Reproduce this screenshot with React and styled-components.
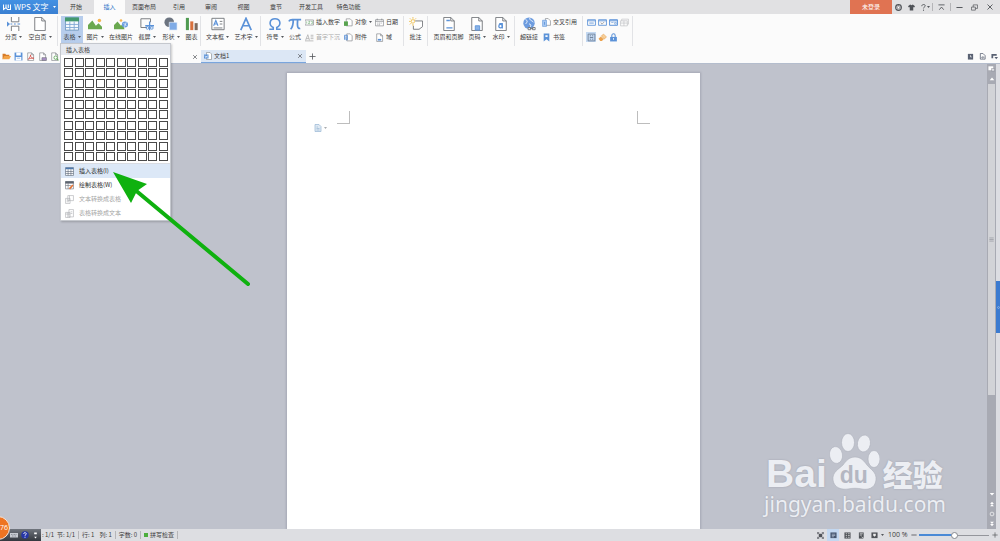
import React, { useState } from 'react';
import styled, { createGlobalStyle, css } from 'styled-components';

const GlobalStyle = createGlobalStyle`
  * {
    box-sizing: border-box;
  }
  body {
    margin: 0;
    overflow: hidden;
    font-family: 'Noto Sans CJK SC', 'Noto Sans', sans-serif;
    font-size: 6px;
    line-height: 8px;
    color: #3c3c3c;
  }
  button, input {
    font: inherit;
    color: inherit;
    margin: 0;
    padding: 0;
    border: 0;
    background: none;
  }
`;

const Shell = styled.div`
  position: relative;
  display: flex;
  flex-direction: column;
  height: 100vh;
  background: #fbfbfb;
`;

const Row = styled.div`
  display: flex;
  align-items: center;
`;

/* ---------- title bar ---------- */
const TitleBar = styled.header`
  display: flex;
  align-items: stretch;
  height: 14px;
  flex: none;
  background: #e1e1e3;
`;

const Brand = styled.button`
  display: flex;
  align-items: center;
  gap: 3px;
  width: 58px;
  padding: 0 2px 0 3px;
  font-size: 8px;
  color: white;
  background: linear-gradient(#4391e3, #3a80d2);
  white-space: nowrap;

  svg:last-child {
    margin-left: auto;
  }
`;

const Tab = styled.button`
  width: ${(p) => p.$w}px;
  white-space: nowrap;
  color: ${(p) => (p.$active ? '#2f74c8' : '#3c3c3c')};
  background: ${(p) => (p.$active ? '#fbfbfb' : 'transparent')};
`;

const WindowTools = styled.div`
  display: flex;
  align-items: center;
  margin-left: auto;
`;

const LoginButton = styled.button`
  align-self: stretch;
  width: 42px;
  color: white;
  background: #e07352;
`;

const ToolButton = styled.button`
  display: flex;
  align-items: center;
  justify-content: center;
  width: ${(p) => p.$w || 12}px;
  height: ${(p) => p.$h || 12}px;
  flex: none;
  background: ${(p) => (p.$on ? '#c3d8f1' : 'transparent')};
`;

const Divider = styled.span`
  width: 1px;
  height: 8px;
  background: #b5b5b8;
`;

/* ---------- ribbon ---------- */
const Ribbon = styled.div`
  display: flex;
  align-items: flex-start;
  height: 36px;
  flex: none;
  padding-top: 2px;
`;

const Group = styled.div`
  display: flex;
  height: 30px;
  padding: 0 ${(p) => p.$right || 0}px 0 ${(p) => p.$left || 0}px;
  border-right: 1px solid #e2e3e6;
`;

const BigButton = styled.button`
  display: flex;
  flex-direction: column;
  align-items: center;
  gap: 2px;
  width: ${(p) => p.$w}px;
  height: 27px;
  padding-top: 1px;
  white-space: nowrap;
  background: ${(p) => (p.$on ? '#b7cdec' : 'transparent')};
`;

const Label = styled.span`
  display: flex;
  align-items: center;
  gap: 2px;
`;

const Column = styled.div`
  display: flex;
  flex-direction: column;
  gap: 5px;
  padding-top: 1px;
  margin-left: ${(p) => p.$gap || 2}px;
  width: ${(p) => p.$w}px;
`;

const SmallButton = styled.button`
  display: flex;
  align-items: center;
  gap: 2px;
  height: 10px;
  white-space: nowrap;
  color: ${(p) => (p.disabled ? '#ababab' : '#3c3c3c')};
`;

const IconGrid = styled.div`
  display: grid;
  grid-template-columns: repeat(4, 11px);
  grid-auto-rows: 10px;
  row-gap: 5px;
  padding-top: 1px;
`;

/* ---------- document tabs ---------- */
const DocBar = styled.div`
  display: flex;
  align-items: stretch;
  height: 14px;
  flex: none;
  border-bottom: 1px solid #b4bdcd;
`;

const QuickTools = styled(Row)`
  width: 58px;
`;

const DocTab = styled.div`
  display: flex;
  align-items: center;
  gap: 2px;
  width: ${(p) => p.$w}px;
  padding-left: 3px;
  ${(p) =>
    p.$active &&
    css`
      background: #dce7f5;
      border-bottom: 1px solid #79a5dd;
    `}

  button {
    margin-left: auto;
  }
`;

/* ---------- work area ---------- */
const Workspace = styled.div`
  display: flex;
  flex: 1;
  min-height: 0;
  background: #bfc2cc;
`;

const Canvas = styled.main`
  flex: 1;
  padding-top: 9px;
  display: flex;
  justify-content: center;
`;

const Page = styled.article`
  width: calc(42% - 2px);
  background: white;
  box-shadow: 0 0 2px 1px #a5a8b4;
`;

const Corners = styled.div`
  display: flex;
  justify-content: space-between;
  padding: 38px 50px 0;
`;

const Corner = styled.span`
  width: 13px;
  height: 13px;
  border-bottom: 1px solid #bdbdbd;
  border-${(p) => p.$side}: 1px solid #bdbdbd;
`;

const PasteButton = styled.button`
  display: flex;
  align-items: center;
  gap: 2px;
  margin-left: 27px;
`;

const ScrollBar = styled.div`
  display: flex;
  flex-direction: column;
  align-items: center;
  width: 9px;
  background: #a8aab3;
`;

const Thumb = styled.div`
  display: flex;
  align-items: center;
  justify-content: center;
  width: 7px;
  flex: 312;
  background: #d2d3d7;
`;

const Track = styled.div`
  flex: 94;
`;

const SideStrip = styled.div`
  display: flex;
  flex-direction: column;
  width: 4px;
  background: #dcdde2;

  &::before {
    content: '';
    flex: 217;
  }
  &::after {
    content: '';
    flex: 196;
  }
`;

const SideHandle = styled.button`
  display: flex;
  align-items: center;
  justify-content: center;
  width: 4px;
  height: 52px;
  background: #3c7bd0;
`;

/* ---------- table menu ---------- */
const Menu = styled.div`
  position: absolute;
  left: 60px;
  top: 43px;
  width: 111px;
  border: 1px solid #c5c8ce;
  background: white;
  box-shadow: 1px 1px 2px rgba(0, 0, 0, 0.2);
`;

const MenuTitle = styled.div`
  height: 11px;
  padding: 2px 5px 1px;
  background: #e6e9ef;
`;

const Cells = styled.div`
  display: grid;
  grid-template-columns: repeat(10, 9px);
  grid-template-rows: repeat(10, 9px);
  justify-content: space-between;
  align-content: space-between;
  height: 103px;
  margin: 3px 2px 2px 3px;

  span {
    border: 1px solid #4a4a4a;
  }
`;

const MenuItems = styled.div`
  border-top: 1px solid #d9dce2;
`;

const MenuItem = styled.button`
  display: flex;
  align-items: center;
  gap: 5px;
  width: 100%;
  height: 14px;
  padding-left: 4px;
  color: ${(p) => (p.disabled ? '#a3a3a3' : '#2c2c2c')};
  background: ${(p) => (p.$on ? '#dce8f7' : 'transparent')};
`;

/* ---------- status bar ---------- */
const StatusBar = styled.footer`
  display: flex;
  align-items: center;
  justify-content: space-between;
  height: 12px;
  flex: none;
  background: #dddee2;
  white-space: nowrap;
`;

const StatusText = styled(Row)`
  padding-left: 42px;
  gap: 3px;
`;

const Pair = styled.span`
  margin-right: 2px;
`;

const Spell = styled(Row)`
  gap: 2px;

  &::before {
    content: '';
    width: 4px;
    height: 4px;
    background: #4cae3c;
  }
`;

const Percent = styled.span`
  width: 19px;
  margin: 0 2px 0 4px;
  font-family: 'Open Sans', sans-serif;
  font-size: 7px;
`;

const Zoom = styled.input`
  appearance: none;
  width: 70px;
  height: 8px;
  background:
    linear-gradient(#4a8ad6, #4a8ad6) left center / 50% 2px no-repeat,
    linear-gradient(#94969c, #94969c) left center / 100% 1px no-repeat;

  &::-webkit-slider-thumb {
    appearance: none;
    width: 7px;
    height: 7px;
    border: 1px solid #85888f;
    border-radius: 50%;
    background: white;
  }
`;

/* ---------- things floating over the window ---------- */
const Arrow = styled.svg`
  position: absolute;
  left: 112px;
  top: 171px;
  pointer-events: none;
`;

const Watermark = styled.div`
  position: absolute;
  right: 54px;
  bottom: 23px;
  color: #eceef3;
  text-shadow: 0 0 2px #9b9eaa;
`;

const LogoLine = styled.div`
  display: flex;
  align-items: flex-end;
  height: 60px;
`;

const Bai = styled.span`
  margin-left: 2px;
  font: bold 39px/32px 'Liberation Sans', sans-serif;
`;

const JingYan = styled.span`
  font-size: 30px;
  font-weight: 900;
  line-height: 34px;
  margin-left: 3px;
`;

const Paw = styled.div`
  position: relative;
  width: 51px;
  height: 57px;
  margin-left: 2px;

  span {
    position: absolute;
    left: 11px;
    bottom: 1px;
    font: bold 23px/28px 'Liberation Sans', sans-serif;
    color: #b4b7c2;
    text-shadow: none;
  }
`;

const Site = styled.div`
  font: 21px/28px 'Noto Sans', sans-serif;
`;

const Tray = styled.div`
  position: absolute;
  left: 0;
  bottom: 0;
  display: flex;
  align-items: center;
  justify-content: space-between;
  width: 41px;
  height: 12px;
  padding: 0 2px 0 10px;
  background: linear-gradient(#70757d, #33373e);
`;

const Ball = styled.div`
  position: absolute;
  left: -14px;
  bottom: 1px;
  width: 24px;
  height: 24px;
  padding: 0 1px;
  border: 1px solid #f6e5da;
  border-radius: 50%;
  background: #ee7422;
  color: white;
  font: 7px/22px 'Open Sans', sans-serif;
  text-align: right;
`;

/* ---------- drawings ---------- */
const G = '#6d7075';
const B = '#5b92d8';

const sheet = <path d="M3 1.5h7l3.500 3.500v10h-10.500zM10 1.500v3.500h3.500" fill="white" stroke={G} />;
const bigSheet = <path d="M2 .5h8l4 4v11H2zM10 .5v4h4" fill="white" stroke={G} />;

const shapes = {
  brand: <path d="M1 3v10l5-4 3 4h6V3M6 3v6M10.500 3v7" stroke="white" strokeWidth="2.200" />,
  pageBreak: <><path d="M5 0v5.500h8.500V0M5 16v-5.500h8.500V16" fill="white" stroke={G} /><path d="M4 8h2M8 8h2M12 8h3" stroke={B} strokeWidth="1.200" /><path d="M0 5l3.500 3L0 11z" fill={B} /></>,
  blank: bigSheet,
  table: <><path d="M.5 1h15v14H.5z" fill="#f4f9fd" stroke="#6d94bd" /><path d="M0 .5h16V5H0z" fill="#43996f" /><path d="M.5 8.500h15M.5 12h15M5.500 5v10M10.500 5v10" stroke="#7ea6d3" /></>,
  picture: <><path d="M0 14V9l5-5 4 6 3-3 4 4v3z" fill="#6aa84f" /><circle cx="13" cy="4" r="2" fill="#f3b552" /></>,
  webPicture: <><path d="M0 14V9l4-4 4 5 2-2 2 6z" fill="#6aa84f" /><circle cx="8" cy="4" r="1.500" fill="#f3b552" /><circle cx="12.500" cy="8.500" r="3.500" fill="#6c9fe0" /><path d="M11 7l3 3M14 6l-2 5" stroke="white" strokeWidth=".8" /></>,
  capture: <><path d="M8 12H1V2h11v4" stroke={G} /><path d="M11 5v10M6 10h10" stroke={B} strokeWidth="1.500" /><circle cx="8.500" cy="12.500" r="1.500" stroke={B} /><circle cx="13.500" cy="12.500" r="1.500" stroke={B} /></>,
  shape: <><circle cx="6" cy="6" r="5.500" fill="#6c7480" /><path d="M6 6h9v9H6z" fill="#7fabe6" stroke="#fbfbfb" strokeWidth=".7" /></>,
  chart: <><path d="M1 1h3.500v14H1z" fill="#4f9a51" /><path d="M6 5h3.500v10H6z" fill="#d8713d" /><path d="M11 7h3.500v8H11z" fill="#7d6b5e" /></>,
  textBox: <><path d="M1 1.500h14v13H1z" fill="white" stroke={G} /><path d="M3 10l2.500-6L8 10M4 8h3" stroke={B} strokeWidth="1.300" /><path d="M10 5h3M10 8h3M3 12.500h10" stroke={G} /></>,
  art: <path d="M2 15L8 1.500 14 15M4.500 10h7" stroke={B} strokeWidth="1.900" />,
  omega: <path d="M1.500 14H6v-2C3 10.500 2 8.500 2.500 6 3 3.500 5 2 8 2s5 1.500 5.500 4c.5 2.500-.5 4.500-3.500 6v2h4.500" stroke={B} strokeWidth="1.800" />,
  pi: <path d="M1 5c1-2 2-2 4-2h10M6 3c0 5-1 9-3 11M11 3c-.5 6-.5 11 3 10" stroke={B} strokeWidth="2" />,
  number: <><path d="M0 3.500h15v9H0z" fill="white" stroke={G} /><path d="M3 6v4M6 6h3l-3 4h3M11 6h2v4h-2" stroke="#5ca35f" /></>,
  drop: <><path d="M1 13L5 3l3 10M2 10h5M10 4h5M10 7h5M10 10h5M0 14h15" stroke="#b3b3b3" strokeWidth="1.500" /></>,
  object: <><path d="M4 1.500h7l3.500 3.500v9H4z" fill="white" stroke={G} /><path d="M0 6h7v8H0z" fill="#58a34f" /></>,
  attach: <><path d="M5 1.500h6l3.500 3.500v9H5z" fill="white" stroke={G} /><path d="M1 12V4h5v8H3.500V6" stroke={B} strokeWidth="1.600" /></>,
  date: <><path d="M1 3h14v11H1zM1 6h14" fill="white" stroke={G} /><path d="M4 1v3M12 1v3M4 9h2M7 9h2M10 9h2M4 12h2M7 12h2" stroke={G} /></>,
  field: <>{sheet}<path d="M5 12h6" stroke={B} strokeWidth="3" /></>,
  comment: <><path d="M7 4.500h8.500v6.500l-4 3H5v-4" fill="white" stroke={G} /><circle cx="4.500" cy="5" r="2" stroke="#efc04f" /><path d="M4.500 0v2M4.500 8v2M0 5h2M1 1.500l1.500 1.500M8 1.500L6.500 3M1 8.500L2.500 7" stroke="#efc04f" /></>,
  header: <>{bigSheet}<path d="M5 4h4M5 12.500h7" stroke={B} strokeWidth="1.500" /></>,
  pageNo: <>{bigSheet}<path d="M6 10h5v5H6z" fill="#8ab3e8" stroke={B} /></>,
  stamp: <>{bigSheet}<circle cx="7.500" cy="10.500" r="2" stroke={B} strokeWidth="1.500" /><path d="M6 7.500h3.500V13" stroke={B} strokeWidth="1.300" /></>,
  link: <><circle cx="8" cy="7" r="6.500" fill="#6d9cdf" /><path d="M4 3c3 1 2 3 0 5M9 1c-1 3 3 3 4 5M8 8c3 0 2 3 1 4" stroke="white" /><path d="M7 12h3v2.500H7zM12 12h3v2.500h-3zM9 13h4" stroke={G} fill="white" /></>,
  crossRef: <><path d="M6 1h5l4 4v8H6z" fill="white" stroke={G} /><path d="M1 4h7v11H1z" fill="#a9c9f2" stroke={B} /><path d="M4.500 12V7" stroke={B} strokeWidth="1.500" /></>,
  bookmark: <><path d="M3 1h10v14l-5-4-5 4z" fill={B} /><path d="M6 4h4v3H6z" fill="white" /></>,
  form: <path d="M1 3h14v10H1zM1 5h14M4 9h8" stroke={B} strokeWidth="1.500" />,
  formCheck: <><path d="M1 3h14v10H1zM1 5h14" stroke={B} strokeWidth="1.500" /><path d="M5 8l2 3 4-4" stroke={G} /></>,
  formList: <><path d="M1 3h14v10H1zM1 5h14" stroke={B} strokeWidth="1.700" /><path d="M4 8h4M10 8h3v3h-3z" stroke={B} /></>,
  formGray: <path d="M1 5h12v9H1zM3 5V2h12v9h-2M7 5v9M1 9h12" stroke="#b6b8bb" />,
  shade: <><path d="M2 2h12v12H2z" stroke="#66788f" strokeWidth="1.400" /><path d="M5 5h2M9 5h2M5 8h6M5 11h2M9 11h2" stroke="#66788f" strokeWidth="1.500" /></>,
  eraser: <><path d="M1 10l4-4 5 5-3 3H4z" fill="#eca24c" /><path d="M6 5l4-3 5 5-4 4z" fill="#f7cf97" stroke="#e29a47" /></>,
  lock: <><path d="M5 7V4.500a3 3 0 016 0V7" stroke={B} strokeWidth="1.800" /><path d="M2 7h12v8H2z" fill={B} /><path d="M8 9v3" stroke="white" strokeWidth="1.500" /></>,
  folder: <><path d="M1 13V3h5l1 2h6v3" fill="#d77b27" /><path d="M1 13l3-6h12l-3 6z" fill="#f2a347" /></>,
  save: <><path d="M1 1h14v14H1z" fill="#5b92d8" /><path d="M4 1h8v5H4zM3 9h10v6H3z" fill="white" /><path d="M5 11h6" stroke={B} /></>,
  pdf: <>{sheet}<path d="M4 13c3-3 4-6 4-8 0 4 2 6 6 6-4 0-7 0-10 2z" stroke="#d14b42" strokeWidth="1.400" /></>,
  print: <>{sheet}<path d="M7 10h8v5H7z" fill="#a98fc4" stroke={G} /></>,
  preview: <>{sheet}<circle cx="10" cy="10" r="3" fill="white" stroke="#59a152" strokeWidth="1.500" /><path d="M12 12l3 3" stroke="#59a152" strokeWidth="1.800" /></>,
  wpsDoc: <><path d="M5 1h7l3 3v11H5z" fill="white" stroke={G} /><path d="M0 5h9v8H0z" fill={B} /><path d="M2 7l1 4 1.500-3L6 11l1-4" stroke="white" /></>,
  close: <path d="M3 3l10 10M13 3L3 13" stroke="#505358" strokeWidth="1.800" />,
  plus: <path d="M8 1v14M1 8h14" stroke="#505358" strokeWidth="1.800" />,
  minus: <path d="M1 8h14" stroke="#505358" strokeWidth="2.200" />,
  soccer: <><circle cx="8" cy="8" r="6.500" stroke="#505358" strokeWidth="2.500" /><path d="M8 5l3 2-1 4H6L5 7zM8 1v4M1 7h4M11 7h4" fill="white" stroke="#505358" /></>,
  shirt: <path d="M5 1l3 2 3-2 5 4-2 3-2-1v8H4V7L2 8 0 5z" fill="#505358" />,
  help: <><path d="M4 5c0-5 8-5 8-1 0 3-4 3-4 6" stroke="#505358" strokeWidth="2" /><circle cx="8" cy="14" r="1.300" fill="#505358" /></>,
  collapse: <path d="M1 2h14M3 13l5-6 5 6" stroke="#505358" strokeWidth="2" />,
  restore: <path d="M1 7h9v7H1zM5 7V2h10v8h-5" stroke="#505358" strokeWidth="1.600" />,
  panel: <><path d="M2 2h12v13H2z" fill="#5a6273" /><path d="M8 5v4h3" stroke="white" strokeWidth="1.500" /></>,
  docArrow: <><path d="M3 1h6l5 5v8H3z" stroke="#5a6273" strokeWidth="1.800" /><path d="M5 10h5M8 7l3 3-3 3" stroke="#5a6273" strokeWidth="1.500" /></>,
  listDown: <><path d="M1 2h12v4H5v6H1z" fill="#5a6273" /><path d="M8 9h8l-4 5z" fill="#5a6273" /></>,
  pasteDoc: <><path d="M2 1h8l4 4v10H2z" fill="#dfe9f3" stroke="#9cb9d5" strokeWidth="1.500" /><path d="M5 6h3M5 9h6M5 12h6" stroke="#9cb9d5" strokeWidth="1.500" /></>,
  menuTable: <><path d="M1 1h14v14H1z" fill="white" stroke="#4e5b6d" /><path d="M1 1h14v3H1z" fill="#4d79ad" /><path d="M1 8h14M1 11.500h14M5.500 4v11M10.500 4v11" stroke="#4e5b6d" /></>,
  menuDraw: <><path d="M1 1h14v13H1z" fill="white" stroke="#5f6670" /><path d="M1 1h14v3H1zM1 8h10M5.500 4v10" fill="#5f6670" stroke="#5f6670" /><path d="M8 14l6-7" stroke="#e1753a" strokeWidth="3" /></>,
  convertA: <path d="M5 1h10v9H5zM8 1v9M1 6h8v9H1zM3 9h4M3 12h4" fill="white" stroke="#a5a8ac" />,
  convertB: <path d="M7 1h8v13H7zM10 5h3M10 8h3M1 6h8v9H1zM1 9h8M5 6v9" fill="white" stroke="#a5a8ac" />,
  ruler: <><path d="M1 3h11v9H1z" fill="white" /><path d="M8 8h7v6H8z" fill="#dcdde2" stroke="#7b7e88" /></>,
  up: <path d="M2 11l6-7 6 7z" fill="white" />,
  down: <path d="M2 5l6 7 6-7z" fill="white" />,
  pageUp: <path d="M3 8l5-6 5 6zM3 14l5-6 5 6z" fill="white" />,
  pageDown: <path d="M3 2l5 6 5-6zM3 8l5 6 5-6z" fill="white" />,
  dot: <circle cx="8" cy="8" r="5" stroke="white" strokeWidth="1.800" />,
  grip: <path d="M1 3h14M1 8h14M1 13h14" stroke="#8d8f96" strokeWidth="2" />,
  full: <><path d="M4 4h8v8H4z" fill="#505358" /><path d="M1 5V1h4M11 1h4v4M15 11v4h-4M5 15H1v-4M2 2l12 12M14 2L2 14" stroke="#505358" strokeWidth="1.500" /></>,
  viewPage: <><path d="M1 1h14v13H1z" fill="#46566f" /><path d="M4 5h8M4 8h8M4 11h5" stroke="#dce8f7" strokeWidth="1.200" /></>,
  viewOutline: <><path d="M1 1h14v14H1z" fill="#505358" /><path d="M4 4h3M9 4h4M4 8h3M9 8h4M4 12h3M9 12h4" stroke="#eee" strokeWidth="1.500" /></>,
  viewWeb: <><path d="M2 1h11v14H2z" fill="#505358" /><path d="M4 4h7M4 7h5M8 11l6 4" stroke="#eee" strokeWidth="1.500" /></>,
  viewEye: <><path d="M1 1h14v13H1z" fill="#505358" /><path d="M5 4h6v4l-3 3-3-3z" fill="#eee" /></>,
  keyboard: <><path d="M0 4h16v9H0z" fill="#c8ccd2" /><path d="M2 7h12M4 10h8" stroke="#5a5f68" strokeDasharray="2 1" /></>,
  trayHelp: <><circle cx="8" cy="8" r="7.500" fill="#2636a8" /><path d="M5.500 6c0-4 5-3 5-.500 0 2-2.500 2-2.500 4M8 11.500v2" stroke="white" strokeWidth="1.800" /></>,
  trayMore: <path d="M5 1h6v4H5zM5 11h6l-3 4z" fill="white" />,
};

const Icon = ({ name, size = 8 }) => (
  <svg width={size} height={size} viewBox="0 0 16 16" fill="none" aria-hidden="true">
    {shapes[name]}
  </svg>
);

const Caret = ({ color = '#55585d' }) => (
  <svg width="3" height="2" viewBox="0 0 6 4" aria-hidden="true">
    <path d="M0 0h6L3 4z" fill={color} />
  </svg>
);

const Big = ({ icon, text, w, caret, on }) => (
  <BigButton type="button" $w={w} $on={on}>
    <Icon name={icon} size={14} />
    <Label>
      {text}
      {caret && <Caret />}
    </Label>
  </BigButton>
);

const Small = ({ icon, text, caret, disabled }) => (
  <SmallButton type="button" disabled={disabled}>
    <Icon name={icon} size={9} />
    {text}
    {caret && <Caret />}
  </SmallButton>
);

const tabs = [
  ['开始', 36],
  ['插入', 31],
  ['页面布局', 38],
  ['引用', 32],
  ['审阅', 32],
  ['视图', 33],
  ['章节', 32],
  ['开发工具', 38],
  ['特色功能', 37],
];

const App = () => {
  const [tab, setTab] = useState('插入');
  const [zoom, setZoom] = useState(100);

  return (
    <>
      <GlobalStyle />
      <Shell>
        <TitleBar>
          <Brand type="button">
            <Icon name="brand" size={8} />
            WPS 文字
            <Caret color="white" />
          </Brand>
          {tabs.map(([name, w]) => (
            <Tab key={name} type="button" $w={w} $active={name === tab} onClick={() => setTab(name)}>
              {name}
            </Tab>
          ))}
          <WindowTools>
            <LoginButton type="button">未登录</LoginButton>
            <ToolButton type="button"><Icon name="soccer" size={7} /></ToolButton>
            <ToolButton type="button" $w={14}><Icon name="shirt" size={7} /></ToolButton>
            <ToolButton type="button" $w={14}><Icon name="help" size={7} /><Caret /></ToolButton>
            <Divider />
            <ToolButton type="button" $w={17}><Icon name="collapse" size={7} /></ToolButton>
            <Divider />
            <ToolButton type="button" $w={17}><Icon name="minus" size={7} /></ToolButton>
            <ToolButton type="button"><Icon name="restore" size={7} /></ToolButton>
            <ToolButton type="button" $w={20}><Icon name="close" size={8} /></ToolButton>
          </WindowTools>
        </TitleBar>

        <Ribbon>
          <Group $right={4}>
            <Big icon="pageBreak" text="分页" w={27} caret />
            <Big icon="blank" text="空白页" w={26} caret />
          </Group>
          <Group $left={3}>
            <Big icon="table" text="表格" w={22} caret on />
            <Big icon="picture" text="图片" w={24} caret />
            <Big icon="webPicture" text="在线图片" w={28} />
            <Big icon="capture" text="截屏" w={24} caret />
            <Big icon="shape" text="形状" w={24} caret />
            <Big icon="chart" text="图表" w={17} />
          </Group>
          <Group $left={2}>
            <Big icon="textBox" text="文本框" w={29} caret />
            <Big icon="art" text="艺术字" w={28} caret />
          </Group>
          <Group $left={2} $right={3}>
            <Big icon="omega" text="符号" w={24} caret />
            <Big icon="pi" text="公式" w={16} />
            <Column $w={37}>
              <Small icon="number" text="插入数字" />
              <Small icon="drop" text="首字下沉" disabled />
            </Column>
            <Column $w={28}>
              <Small icon="object" text="对象" caret />
              <Small icon="attach" text="附件" />
            </Column>
            <Column $w={25} $gap={3}>
              <Small icon="date" text="日期" />
              <Small icon="field" text="域" />
            </Column>
          </Group>
          <Group>
            <Big icon="comment" text="批注" w={23} />
          </Group>
          <Group $left={4} $right={1}>
            <Big icon="header" text="页眉和页脚" w={33} />
            <Big icon="pageNo" text="页码" w={24} caret />
            <Big icon="stamp" text="水印" w={24} caret />
          </Group>
          <Group $left={3} $right={2}>
            <Big icon="link" text="超链接" w={22} />
            <Column $w={38}>
              <Small icon="crossRef" text="交叉引用" />
              <Small icon="bookmark" text="书签" />
            </Column>
          </Group>
          <Group $left={3} $right={2}>
            <IconGrid>
              {['form', 'formCheck', 'formList', 'formGray', 'shade', 'eraser', 'lock'].map((name) => (
                <ToolButton key={name} type="button" $w={10} $h={10} $on={name === 'shade'}>
                  <Icon name={name} size={9} />
                </ToolButton>
              ))}
            </IconGrid>
          </Group>
        </Ribbon>

        <DocBar>
          <QuickTools>
            {['folder', 'save', 'pdf', 'print', 'preview'].map((name) => (
              <ToolButton key={name} type="button">
                <Icon name={name} size={9} />
              </ToolButton>
            ))}
          </QuickTools>
          <DocTab $w={143}>
            <ToolButton type="button"><Icon name="close" size={6} /></ToolButton>
          </DocTab>
          <DocTab $w={105} $active>
            <Icon name="wpsDoc" size={8} />
            文档1
            <ToolButton type="button"><Icon name="close" size={6} /></ToolButton>
          </DocTab>
          <ToolButton type="button"><Icon name="plus" size={7} /></ToolButton>
          <WindowTools>
            <ToolButton type="button"><Icon name="panel" size={7} /></ToolButton>
            <ToolButton type="button"><Icon name="docArrow" size={7} /></ToolButton>
            <ToolButton type="button"><Icon name="listDown" size={7} /></ToolButton>
          </WindowTools>
        </DocBar>

        <Workspace>
          <Canvas>
            <Page>
              <Corners>
                <Corner $side="right" />
                <Corner $side="left" />
              </Corners>
              <PasteButton type="button">
                <Icon name="pasteDoc" size={8} />
                <Caret color="#a9acb0" />
              </PasteButton>
            </Page>
          </Canvas>
          <ScrollBar>
            <ToolButton type="button" $w={9} $h={9}><Icon name="ruler" size={7} /></ToolButton>
            <ToolButton type="button" $w={9} $h={11}><Icon name="up" size={6} /></ToolButton>
            <Thumb><Icon name="grip" size={5} /></Thumb>
            <Track />
            {['down', 'pageUp', 'dot', 'pageDown'].map((name) => (
              <ToolButton key={name} type="button" $w={9} $h={10}>
                <Icon name={name} size={6} />
              </ToolButton>
            ))}
          </ScrollBar>
          <SideStrip>
            <SideHandle type="button"><Icon name="dot" size={3} /></SideHandle>
          </SideStrip>
        </Workspace>

        <StatusBar>
          <StatusText>
            <span>: 1/1</span>
            <span>节: 1/1</span>
            <Divider />
            <Pair>行: 1</Pair>
            <span>列: 1</span>
            <Divider />
            <span>字数: 0</span>
            <Divider />
            <Spell>拼写检查</Spell>
            <Divider />
          </StatusText>
          <Row>
            <ToolButton type="button" $w={14}><Icon name="full" size={7} /></ToolButton>
            <ToolButton type="button" $on><Icon name="viewPage" size={7} /></ToolButton>
            <ToolButton type="button" $w={16}><Icon name="viewOutline" size={7} /></ToolButton>
            <ToolButton type="button"><Icon name="viewWeb" size={7} /></ToolButton>
            <ToolButton type="button" $w={14}><Icon name="viewEye" size={7} /></ToolButton>
            <Caret />
            <Percent>{zoom} %</Percent>
            <ToolButton type="button" $w={10}><Icon name="minus" size={6} /></ToolButton>
            <Zoom
              type="range"
              min="0"
              max="200"
              value={zoom}
              aria-label="100 %"
              onChange={(e) => setZoom(Number(e.target.value))}
            />
            <ToolButton type="button" $w={11}><Icon name="plus" size={6} /></ToolButton>
          </Row>
        </StatusBar>

        <Menu>
          <MenuTitle>插入表格</MenuTitle>
          <Cells>
            {Array.from({ length: 100 }, (_, i) => (
              <span key={i} />
            ))}
          </Cells>
          <MenuItems>
            <MenuItem type="button" $on><Icon name="menuTable" size={9} />插入表格(I)</MenuItem>
            <MenuItem type="button"><Icon name="menuDraw" size={9} />绘制表格(W)</MenuItem>
            <MenuItem type="button" disabled><Icon name="convertA" size={9} />文本转换成表格</MenuItem>
            <MenuItem type="button" disabled><Icon name="convertB" size={9} />表格转换成文本</MenuItem>
          </MenuItems>
        </Menu>

        <Watermark>
          <LogoLine>
            <Bai>Bai</Bai>
            <Paw>
              <svg width="51" height="57" viewBox="0 0 51 57" fill="#eceef3" stroke="#adb0bb" strokeWidth="0.600">
                <ellipse cx="7" cy="22" rx="6.500" ry="8.500" transform="rotate(-10 7 22)" />
                <ellipse cx="19" cy="9.500" rx="6.500" ry="9" />
                <ellipse cx="35" cy="10.500" rx="6.500" ry="8.500" transform="rotate(10 35 10)" />
                <ellipse cx="45" cy="26" rx="6" ry="8.500" />
                <path d="M26 24c6 0 9 4 12 8s10 7 9 15c-1 9-9 10-14 9-5-1-9-1-14 0-6 1-14-1-15-9-1-8 6-11 10-15 3-4 6-8 12-8z" />
              </svg>
              <span>du</span>
            </Paw>
            <JingYan>经验</JingYan>
          </LogoLine>
          <Site>jingyan.baidu.com</Site>
        </Watermark>

        <Arrow width="140" height="118" viewBox="0 0 140 118">
          <path d="M22 18L136 113" stroke="#0fb10f" strokeWidth="4" strokeLinecap="round" />
          <path d="M1 1l34 12-10 7-6 12z" fill="#0fb10f" />
        </Arrow>

        <Tray>
          <Icon name="keyboard" size={8} />
          <Icon name="trayHelp" size={8} />
          <Icon name="trayMore" size={7} />
        </Tray>
        <Ball>76</Ball>
      </Shell>
    </>
  );
};

export default App;
